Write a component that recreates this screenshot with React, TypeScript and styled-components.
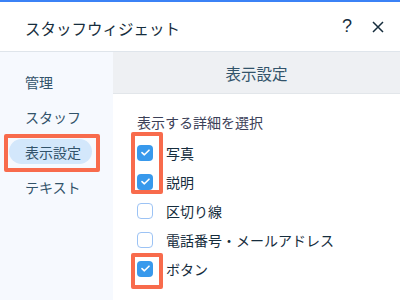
import React from "react";
import styled, { createGlobalStyle } from "styled-components";

const GlobalStyle = createGlobalStyle`
  html, body {
    margin: 0;
    padding: 0;
    background: #fff;
  }
  body {
    font-family: "Noto Sans CJK JP", "Noto Sans", sans-serif;
  }
`;

const Frame = styled.div`
  width: 400px;
  height: 300px;
  display: flex;
  flex-direction: column;
  border-top: 2px solid #3b82f6;
  box-sizing: border-box;
  overflow: hidden;
  background: #fff;
`;

const Header = styled.div`
  height: 50px;
  flex: none;
  display: flex;
  align-items: center;
  padding: 0 11px 0 25px;
  border-bottom: 1px solid #dfe5eb;
  box-sizing: border-box;
`;

const Title = styled.div`
  flex: 1;
  font-size: 15.5px;
  color: #162d3d;
  line-height: 20px;
  padding-top: 2px;
`;

const IconButton = styled.button`
  border: none;
  background: none;
  padding: 0;
  width: 22px;
  height: 22px;
  display: flex;
  align-items: center;
  justify-content: center;
  color: #162d3d;
  font-family: "Liberation Sans", sans-serif;
  font-size: 18px;
  margin-left: 9px;
`;

const Body = styled.div`
  flex: 1;
  display: flex;
  min-height: 0;
`;

const Sidebar = styled.div`
  width: 113px;
  flex: none;
  background: #f6f9fe;
  padding-top: 12px;
  box-sizing: border-box;
`;

const NavItem = styled.div`
  height: 35px;
  display: flex;
  align-items: center;
  padding-left: 25px;
  font-size: 14px;
  color: #32536a;
`;

const NavPill = styled.div`
  position: relative;
  height: 35px;
  display: flex;
  align-items: center;
  padding-left: 9px;
`;

const PillInner = styled.div`
  width: 83px;
  height: 25px;
  border-radius: 13px;
  background: #d3e7fb;
  display: flex;
  align-items: center;
  padding-left: 16px;
  box-sizing: border-box;
  font-size: 14px;
  color: #32536a;
`;

const Mark = styled.div<{ $l: number; $t: number; $w: number; $h: number }>`
  position: absolute;
  left: ${(p) => p.$l}px;
  top: ${(p) => p.$t}px;
  width: ${(p) => p.$w}px;
  height: ${(p) => p.$h}px;
  border: 4px solid #f86b4c;
  border-radius: 2px;
  box-sizing: border-box;
  pointer-events: none;
`;

const Main = styled.div`
  flex: 1;
  display: flex;
  flex-direction: column;
`;

const SectionHead = styled.div`
  height: 42px;
  flex: none;
  display: flex;
  align-items: center;
  justify-content: center;
  background: #eef0f3;
  border-bottom: 1px solid #e2e6ea;
  box-sizing: border-box;
  font-size: 15.5px;
  color: #32536a;
`;

const Content = styled.div`
  position: relative;
  flex: 1;
  padding: 18px 0 0 24px;
`;

const Subtitle = styled.div`
  font-size: 14px;
  line-height: 20px;
  color: #3b4057;
  margin-bottom: 6px;
`;

const Row = styled.div`
  height: 29px;
  display: flex;
  align-items: center;
  gap: 13px;
  font-size: 14px;
  color: #162d3d;
`;

const Box = styled.div<{ $on: boolean }>`
  width: 16px;
  height: 16px;
  flex: none;
  border-radius: 4px;
  box-sizing: border-box;
  background: ${(p) => (p.$on ? "#3899ec" : "#fff")};
  border: ${(p) => (p.$on ? "none" : "1.5px solid #9cc3f5")};
  display: flex;
  align-items: center;
  justify-content: center;
`;

const Check = () => (
  <svg width="9" height="7" viewBox="0 0 9 7">
    <polyline
      points="1,3.6 3.4,5.8 8,1.2"
      fill="none"
      stroke="#fff"
      strokeWidth="1.6"
      strokeLinecap="round"
      strokeLinejoin="round"
    />
  </svg>
);

const CloseIcon = () => (
  <svg width="12" height="12" viewBox="0 0 12 12">
    <path d="M1 1 L11 11 M11 1 L1 11" stroke="#162d3d" strokeWidth="1.5" />
  </svg>
);

const options = [
  { label: "写真", on: true },
  { label: "説明", on: true },
  { label: "区切り線", on: false },
  { label: "電話番号・メールアドレス", on: false },
  { label: "ボタン", on: true },
];

export default function App() {
  return (
    <>
      <GlobalStyle />
      <Frame>
        <Header>
          <Title>スタッフウィジェット</Title>
          <IconButton>?</IconButton>
          <IconButton>
            <CloseIcon />
          </IconButton>
        </Header>
        <Body>
          <Sidebar>
            <NavItem>管理</NavItem>
            <NavItem>スタッフ</NavItem>
            <NavPill>
              <PillInner>表示設定</PillInner>
              <Mark $l={4} $t={0} $w={96} $h={38} />
            </NavPill>
            <NavItem>テキスト</NavItem>
          </Sidebar>
          <Main>
            <SectionHead>表示設定</SectionHead>
            <Content>
              <Subtitle>表示する詳細を選択</Subtitle>
              {options.map((o) => (
                <Row key={o.label}>
                  <Box $on={o.on}>{o.on && <Check />}</Box>
                  {o.label}
                </Row>
              ))}
              <Mark $l={18} $t={38} $w={32} $h={62} />
              <Mark $l={18} $t={159} $w={32} $h={36} />
            </Content>
          </Main>
        </Body>
      </Frame>
    </>
  );
}
